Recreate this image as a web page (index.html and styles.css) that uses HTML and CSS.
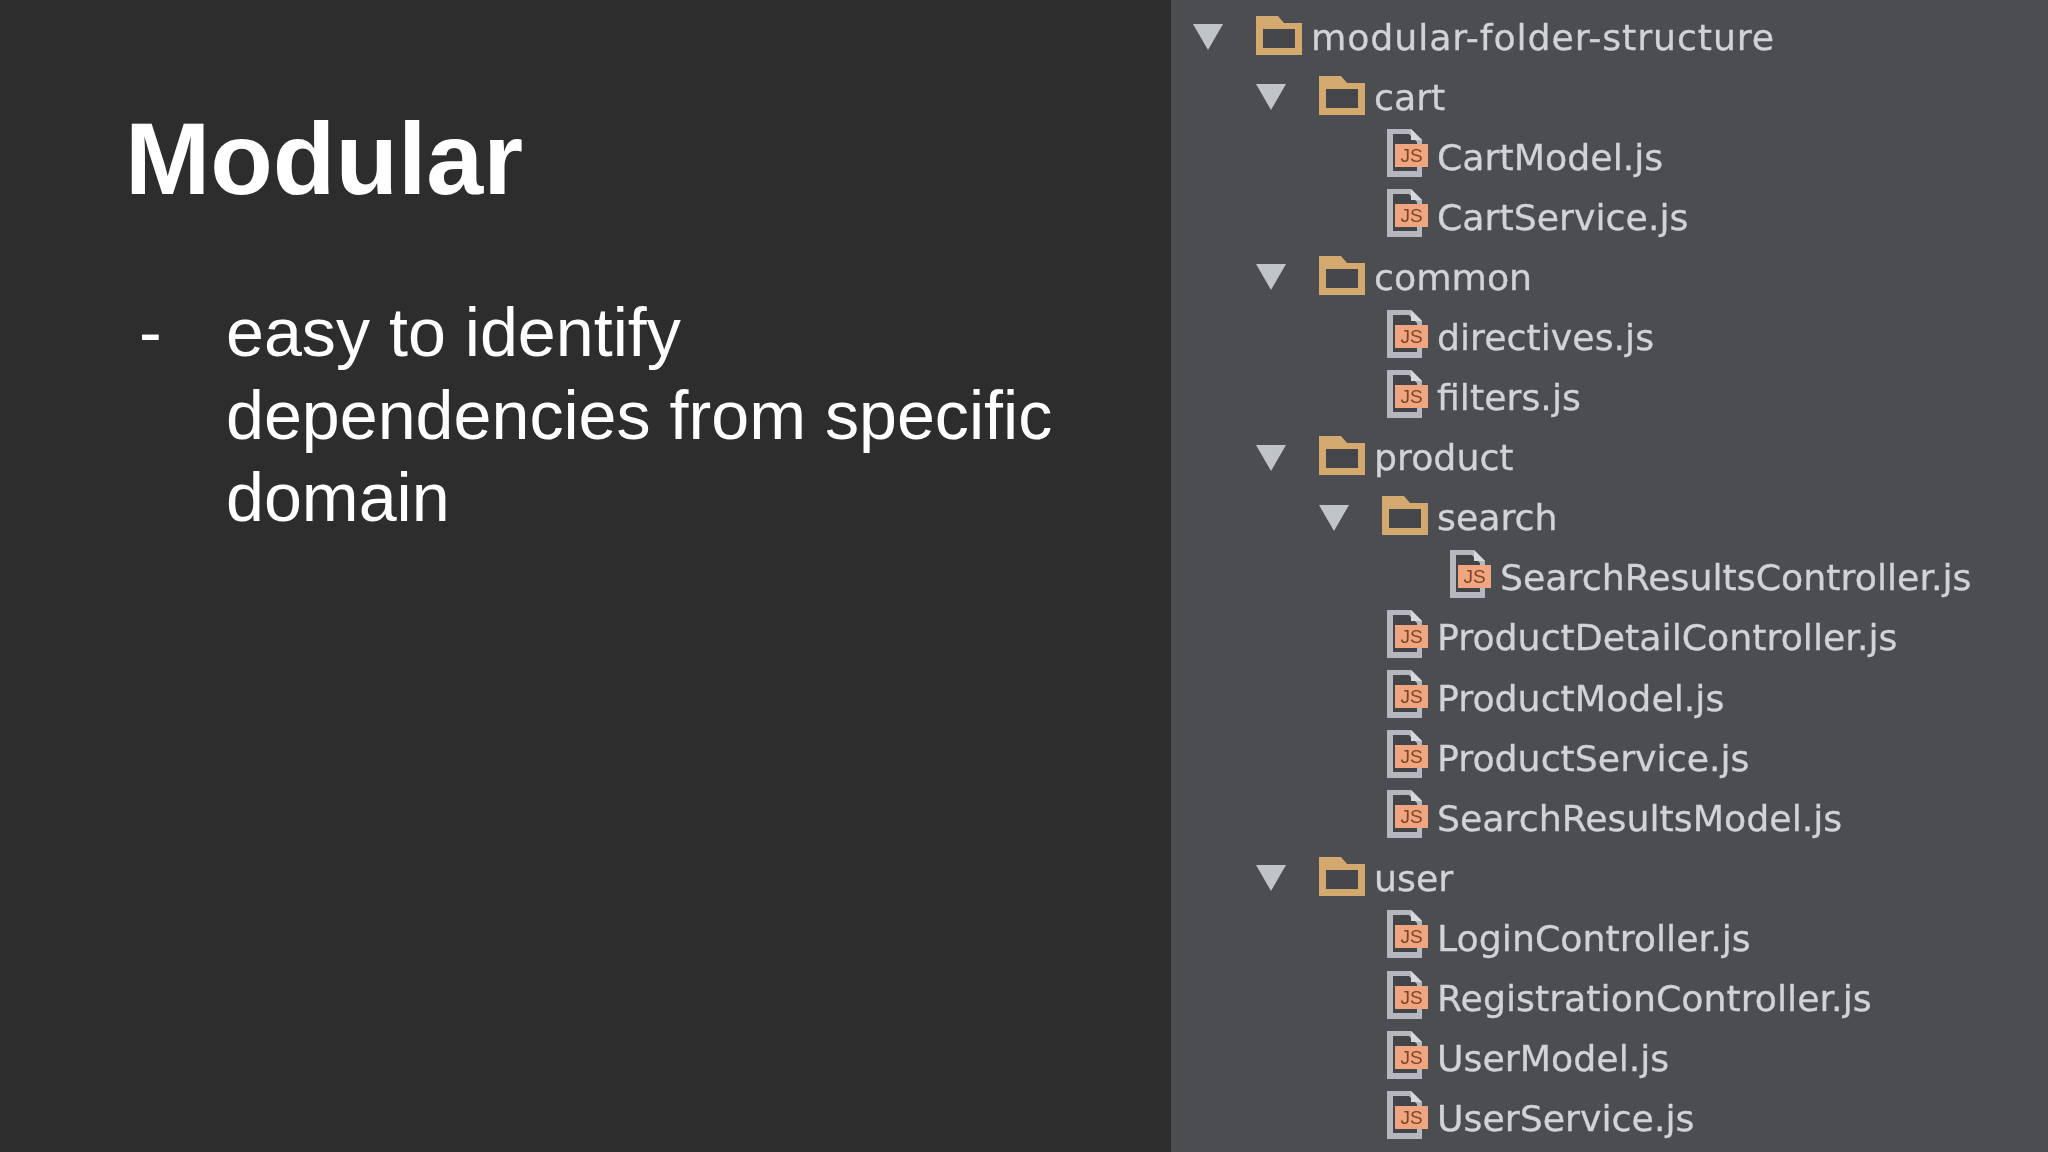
FILE: index.html
```html
<!DOCTYPE html>
<html>
<head>
<link rel="stylesheet" href="styles.css">
</head>
<body>
<svg class="defs" width="0" height="0">
  <symbol id="arrow" viewBox="0 0 30 26"><polygon points="0,0 30,0 15,26"/></symbol>
  <symbol id="folder" viewBox="0 0 46 39">
    <path d="M0 0H22L28 7H46V39H0Z" fill="#d4a970"/>
    <rect x="7" y="13" width="32" height="19" fill="#44464a"/>
  </symbol>
  <symbol id="file" viewBox="0 0 36 48">
    <path d="M0 0H24L35 11V48H0Z" fill="#b4b8be"/>
    <path d="M6 5H22L30 13V42H6Z" fill="#424447"/>
    <path d="M24 0V11H35Z" fill="#d5d8dc"/>
  </symbol>
</svg>

<div id="slide">
  <div id="leftPanel">
    <h1>Modular</h1>
    <div class="bullet">
      <div class="dash">-</div>
      <div class="bulletText">easy to identify dependencies from specific domain</div>
    </div>
  </div>

  <div id="tree">
    <div class="row depth0"><span class="toggle"><svg><use href="#arrow"/></svg></span><span class="icon"><svg class="folderIcon"><use href="#folder"/></svg></span><span class="rootName">modular-folder-structure</span></div>
    <div class="row depth1"><span class="toggle"><svg><use href="#arrow"/></svg></span><span class="icon"><svg class="folderIcon"><use href="#folder"/></svg></span><span>cart</span></div>
    <div class="row depth2"><span class="toggle"></span><span class="icon"><svg class="fileIcon"><use href="#file"/></svg><span class="js">JS</span></span><span>CartModel.js</span></div>
    <div class="row depth2"><span class="toggle"></span><span class="icon"><svg class="fileIcon"><use href="#file"/></svg><span class="js">JS</span></span><span>CartService.js</span></div>
    <div class="row depth1"><span class="toggle"><svg><use href="#arrow"/></svg></span><span class="icon"><svg class="folderIcon"><use href="#folder"/></svg></span><span>common</span></div>
    <div class="row depth2"><span class="toggle"></span><span class="icon"><svg class="fileIcon"><use href="#file"/></svg><span class="js">JS</span></span><span>directives.js</span></div>
    <div class="row depth2"><span class="toggle"></span><span class="icon"><svg class="fileIcon"><use href="#file"/></svg><span class="js">JS</span></span><span>filters.js</span></div>
    <div class="row depth1"><span class="toggle"><svg><use href="#arrow"/></svg></span><span class="icon"><svg class="folderIcon"><use href="#folder"/></svg></span><span>product</span></div>
    <div class="row depth2"><span class="toggle"><svg><use href="#arrow"/></svg></span><span class="icon"><svg class="folderIcon"><use href="#folder"/></svg></span><span>search</span></div>
    <div class="row depth3"><span class="toggle"></span><span class="icon"><svg class="fileIcon"><use href="#file"/></svg><span class="js">JS</span></span><span>SearchResultsController.js</span></div>
    <div class="row depth2"><span class="toggle"></span><span class="icon"><svg class="fileIcon"><use href="#file"/></svg><span class="js">JS</span></span><span>ProductDetailController.js</span></div>
    <div class="row depth2"><span class="toggle"></span><span class="icon"><svg class="fileIcon"><use href="#file"/></svg><span class="js">JS</span></span><span>ProductModel.js</span></div>
    <div class="row depth2"><span class="toggle"></span><span class="icon"><svg class="fileIcon"><use href="#file"/></svg><span class="js">JS</span></span><span>ProductService.js</span></div>
    <div class="row depth2"><span class="toggle"></span><span class="icon"><svg class="fileIcon"><use href="#file"/></svg><span class="js">JS</span></span><span>SearchResultsModel.js</span></div>
    <div class="row depth1"><span class="toggle"><svg><use href="#arrow"/></svg></span><span class="icon"><svg class="folderIcon"><use href="#folder"/></svg></span><span>user</span></div>
    <div class="row depth2"><span class="toggle"></span><span class="icon"><svg class="fileIcon"><use href="#file"/></svg><span class="js">JS</span></span><span>LoginController.js</span></div>
    <div class="row depth2"><span class="toggle"></span><span class="icon"><svg class="fileIcon"><use href="#file"/></svg><span class="js">JS</span></span><span>RegistrationController.js</span></div>
    <div class="row depth2"><span class="toggle"></span><span class="icon"><svg class="fileIcon"><use href="#file"/></svg><span class="js">JS</span></span><span>UserModel.js</span></div>
    <div class="row depth2"><span class="toggle"></span><span class="icon"><svg class="fileIcon"><use href="#file"/></svg><span class="js">JS</span></span><span>UserService.js</span></div>
  </div>
</div>
</body>
</html>
```

FILE: styles.css
```css
html, body {
  height: 100%;
  margin: 0;
  padding: 0;
  overflow: hidden;
}

.defs {
  display: block;
  height: 0;
}

#slide {
  display: flex;
  height: 1152px;
}

/* left side: the slide text */
#leftPanel {
  width: 1171px;
  box-sizing: border-box;
  padding: 99px 80px 0 125px;
  background-color: #2d2d2e;
  color: white;
  font-family: "Liberation Sans", Arial, sans-serif;
}

h1 {
  margin: 0;
  font-size: 102.4px;
  line-height: 120px;
  font-weight: bold;
}

.bullet {
  display: flex;
  margin-top: 72px;
  font-size: 68.2px;
  line-height: 82.6px;
}

.dash {
  width: 101px;
  padding-left: 14px;
  box-sizing: border-box;
  flex-shrink: 0;
}

/* right side: the file tree */
#tree {
  flex: 1;
  padding: 7px 0 0 22px;
  background-color: #4b4d50;
  color: #d0d3d7;
  font-family: "DejaVu Sans", sans-serif;
  font-size: 36.3px;
  -webkit-text-stroke: 0.3px #d0d3d7;
  filter: blur(0.6px);
}

.row {
  display: flex;
  align-items: center;
  height: 60.1px;
  white-space: nowrap;
}

.depth1 { padding-left: 63px; }
.depth2 { padding-left: 126px; }
.depth3 { padding-left: 189px; }

.rootName {
  letter-spacing: 0.9px;
}

.toggle {
  width: 63px;
  flex-shrink: 0;
  display: flex;
}

.toggle svg {
  width: 30px;
  height: 26px;
  fill: #c0c3c8;
}

.icon {
  position: relative;
  width: 55px;
  height: 48px;
  margin-bottom: 8px;
  flex-shrink: 0;
  display: flex;
  align-items: center;
}

.folderIcon {
  width: 46px;
  height: 39px;
  margin-top: 4px;
}

.fileIcon {
  width: 36px;
  height: 48px;
  margin-left: 5px;
}

.js {
  position: absolute;
  left: 13px;
  top: 15px;
  width: 33px;
  height: 23px;
  background-color: #efa680;
  color: #7d4528;
  font-family: "Liberation Sans", sans-serif;
  font-size: 19px;
  line-height: 23px;
  text-align: center;
  -webkit-text-stroke: 0;
}
```
